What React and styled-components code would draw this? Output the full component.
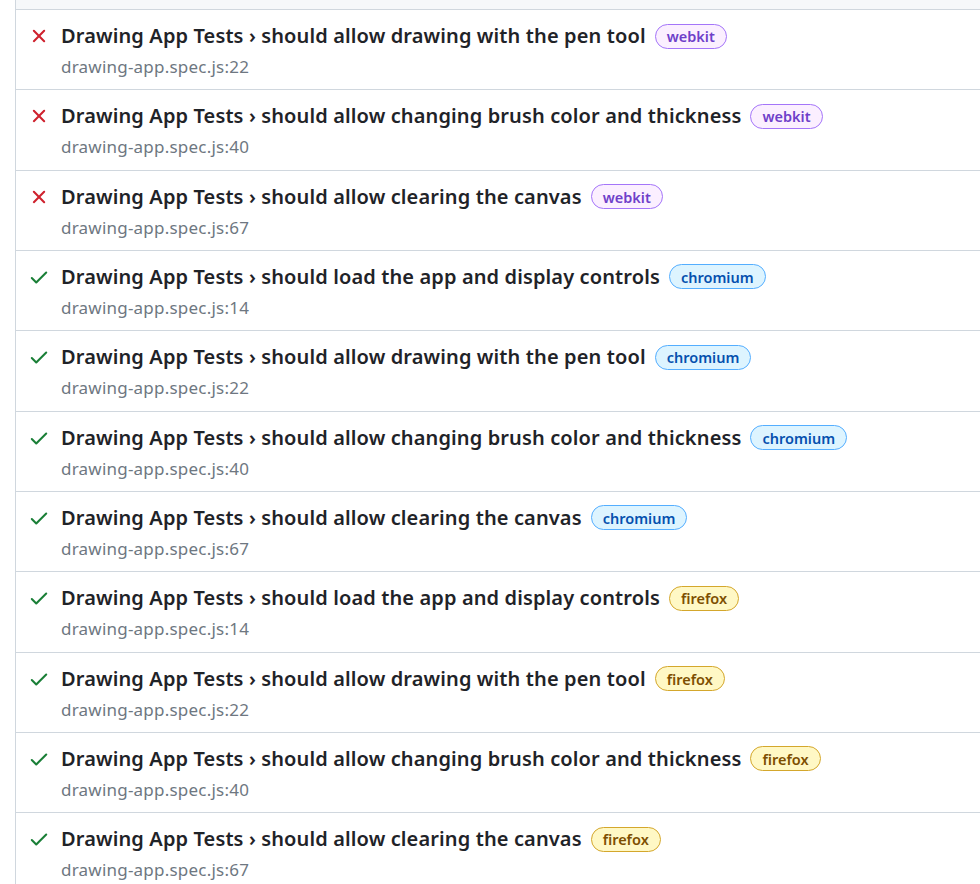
import React from "react";
import styled, { createGlobalStyle } from "styled-components";

const Global = createGlobalStyle`
  html, body { margin: 0; padding: 0; background: #fff; overflow: hidden; }
  body { font-family: "Noto Sans", "Segoe UI", sans-serif; color: #1f2328; }
`;

const Page = styled.div`
  padding-left: 15px;
  width: 1000px;
`;

const List = styled.div`
  border-left: 1px solid #d0d7de;
`;

const TopBand = styled.div`
  height: 9px;
  background: #f6f8fa;
  border-bottom: 1px solid #d0d7de;
`;

const Row = styled.div`
  display: flex;
  align-items: flex-start;
  gap: 11px;
  padding: 12px 12px 0 12px;
  height: 80.33px;
  box-sizing: border-box;
  border-bottom: 1px solid #d0d7de;
`;

const IconBox = styled.div`
  width: 22px;
  height: 22px;
  margin-top: 3px;
  flex: none;
  color: ${(p) => (p.$ok ? "#1a7f37" : "#cf222e")};
  svg { display: block; }
`;

const Body = styled.div`
  display: flex;
  flex-direction: column;
  min-width: 0;
`;

const TitleLine = styled.div`
  display: flex;
  align-items: center;
  white-space: nowrap;
  font-size: 20px;
  line-height: 28px;
  font-weight: 600;
  letter-spacing: 0.12px;
  color: #1f2328;
`;

const Location = styled.div`
  font-size: 17px;
  line-height: 24px;
  margin-top: 5px;
  letter-spacing: 0.22px;
  color: #6e7781;
`;

const badgeColors = {
  webkit: { bg: "#fbefff", border: "#a475f9", fg: "#6e40c9" },
  chromium: { bg: "#ddf4ff", border: "#54aeff", fg: "#0550ae" },
  firefox: { bg: "#fff8c5", border: "#d4a72c", fg: "#7d4e00" },
};

const Badge = styled.span`
  display: inline-flex;
  align-items: center;
  height: 25px;
  box-sizing: border-box;
  margin-left: 9px;
  padding: 0 11px;
  border-radius: 13px;
  font-size: 14.5px;
  font-weight: 600;
  letter-spacing: 0;
  background: ${(p) => badgeColors[p.$kind].bg};
  border: 1px solid ${(p) => badgeColors[p.$kind].border};
  color: ${(p) => badgeColors[p.$kind].fg};
`;

const CheckIcon = () => (
  <svg width="22" height="22" viewBox="0 0 16 16" fill="currentColor">
    <path d="M13.78 4.22a.75.75 0 0 1 0 1.06l-7.25 7.25a.75.75 0 0 1-1.06 0L2.22 9.28a.751.751 0 0 1 .018-1.042.751.751 0 0 1 1.042-.018L6 10.94l6.72-6.72a.75.75 0 0 1 1.06 0Z" />
  </svg>
);

const XIcon = () => (
  <svg width="22" height="22" viewBox="0 0 16 16" fill="currentColor">
    <path d="M3.72 3.72a.75.75 0 0 1 1.06 0L8 6.94l3.22-3.22a.749.749 0 0 1 1.275.326.749.749 0 0 1-.215.734L9.06 8l3.22 3.22a.749.749 0 0 1-.326 1.275.749.749 0 0 1-.734-.215L8 9.06l-3.22 3.220a.751.751 0 0 1-1.042-.018.751.751 0 0 1-.018-1.042L6.94 8 3.72 4.78a.75.75 0 0 1 0-1.06Z" />
  </svg>
);

const tests = [
  ["should allow drawing with the pen tool", 22],
  ["should allow changing brush color and thickness", 40],
  ["should allow clearing the canvas", 67],
];
const loadTest = ["should load the app and display controls", 14];

const rows = [
  ...tests.map((t) => ({ ok: false, name: t[0], line: t[1], proj: "webkit" })),
  ...[loadTest, ...tests].map((t) => ({ ok: true, name: t[0], line: t[1], proj: "chromium" })),
  ...[loadTest, ...tests].map((t) => ({ ok: true, name: t[0], line: t[1], proj: "firefox" })),
];

export default function App() {
  return (
    <>
      <Global />
      <Page>
        <List>
          <TopBand />
          {rows.map((r, i) => (
            <Row key={i}>
              <IconBox $ok={r.ok}>{r.ok ? <CheckIcon /> : <XIcon />}</IconBox>
              <Body>
                <TitleLine>
                  Drawing App Tests › {r.name}
                  <Badge $kind={r.proj}>{r.proj}</Badge>
                </TitleLine>
                <Location>drawing-app.spec.js:{r.line}</Location>
              </Body>
            </Row>
          ))}
        </List>
      </Page>
    </>
  );
}
